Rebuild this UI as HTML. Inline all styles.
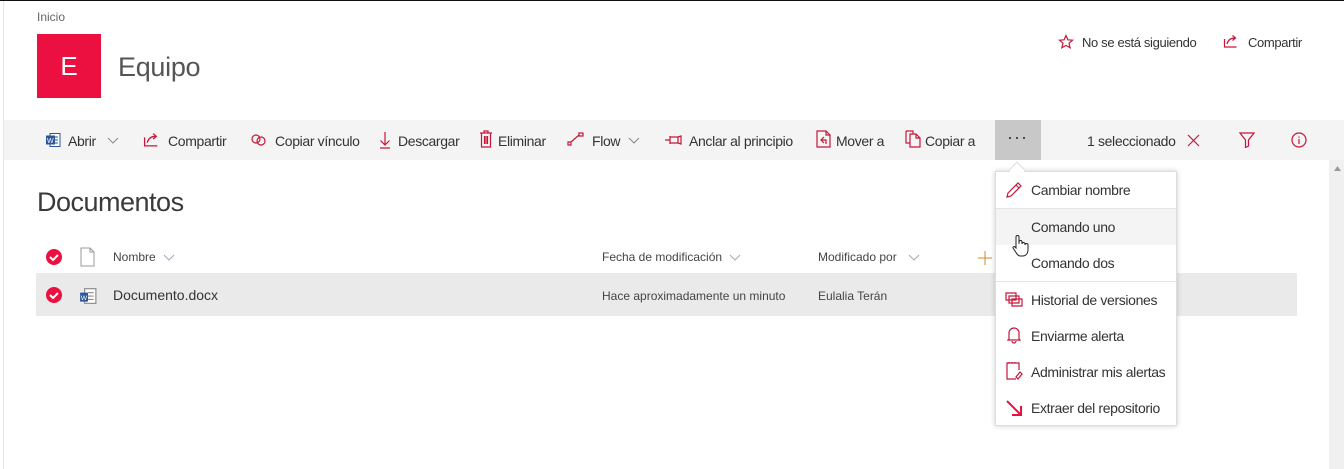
<!DOCTYPE html>
<html><head><meta charset="utf-8"><style>
*{margin:0;padding:0;box-sizing:border-box}
body{width:1344px;height:469px;overflow:hidden;background:#fff;font-family:"Liberation Sans",sans-serif;color:#333;position:relative}
.a{position:absolute;white-space:nowrap}
.t{font-size:14px;color:#333;letter-spacing:-0.35px}
svg{position:absolute}
.r{stroke:#c4173a;fill:none;stroke-width:1.2}
</style></head><body>
<div class="a" style="left:0;top:0;width:1344px;height:1px;background:#111"></div>
<div class="a" style="left:3px;top:1px;width:1px;height:468px;background:#e6e6e6"></div>
<div class="a" style="left:37px;top:10px;font-size:12px;color:#666">Inicio</div>
<div class="a" style="left:37px;top:34px;width:64px;height:64px;background:#ec1041;color:#fff;font-size:26px;text-align:center;line-height:64px">E</div>
<div class="a" style="left:118px;top:52px;font-size:27px;color:#555;letter-spacing:-0.3px">Equipo</div>
<svg style="left:1058px;top:34px" width="16" height="16" viewBox="0 0 16 16"><path class="r" d="M8 1.5l1.9 4.3 4.6.4-3.5 3 1.1 4.6L8 11.4 3.9 13.8 5 9.2 1.5 6.2l4.6-.4z"/></svg>
<div class="a t" style="left:1082px;top:35px;font-size:13px">No se está siguiendo</div>
<svg style="left:1223px;top:33px" width="16" height="16" viewBox="0 0 16 16"><path class="r" d="M1.5 6v8h12M4 11c1-4 4-6 8-6M9.5 2.5L12.5 5l-3 2.5"/></svg>
<div class="a t" style="left:1248px;top:35px;font-size:13px">Compartir</div>

<div class="a" style="left:4px;top:120px;width:1340px;height:40px;background:#f4f4f4"></div>
<div class="a" style="left:995px;top:120px;width:46px;height:40px;background:#c8c8c8"></div>
<svg style="left:45px;top:132px" width="16" height="16" viewBox="0 0 16 16"><rect x="5" y="1.5" width="10" height="13" fill="#fff" stroke="#2b579a"/><path d="M8 5h5M8 8h5M8 11h5" stroke="#2b579a"/><rect x="1" y="3.5" width="9" height="9" fill="#2b579a"/><text x="2" y="11" font-size="7" fill="#fff" font-family="Liberation Sans">W</text></svg>
<div class="a t" style="left:68px;top:133px">Abrir</div>
<svg style="left:107px;top:137px" width="12" height="8"><path d="M1 1l5 5 5-5" stroke="#888" fill="none"/></svg>
<svg style="left:143px;top:131px" width="17" height="17" viewBox="0 0 16 16"><path class="r" d="M1.5 6v8h12M4 11c1-4 4-6 8-6M9.5 2.5L12.5 5l-3 2.5"/></svg>
<div class="a t" style="left:168px;top:133px">Compartir</div>
<svg style="left:250px;top:133px" width="18" height="14" viewBox="0 0 18 14"><circle class="r" cx="6" cy="6" r="4"/><circle class="r" cx="11" cy="8" r="4"/></svg>
<div class="a t" style="left:275px;top:133px">Copiar vínculo</div>
<svg style="left:379px;top:131px" width="12" height="18"><path class="r" d="M6 1v13M1.5 9.5L6 14l4.5-4.5M1 17h10"/></svg>
<div class="a t" style="left:398px;top:133px">Descargar</div>
<svg style="left:479px;top:130px" width="14" height="18"><path class="r" d="M1 3h12M5 3V1h4v2M2.5 3v14h9V3M5.5 6v8M7 6v8M8.5 6v8"/></svg>
<div class="a t" style="left:498px;top:133px">Eliminar</div>
<svg style="left:567px;top:132px" width="18" height="14"><path class="r" d="M1 10h3v3H1zM12 1h4v3h-4zM4 10l8-7"/></svg>
<div class="a t" style="left:592px;top:133px">Flow</div>
<svg style="left:628px;top:137px" width="12" height="8"><path d="M1 1l5 5 5-5" stroke="#888" fill="none"/></svg>
<svg style="left:665px;top:134px" width="18" height="12"><path class="r" d="M0 6h5M5 2v8M5 3h8v6H5M13 3l3 -1v8l-3-1"/></svg>
<div class="a t" style="left:689px;top:133px">Anclar al principio</div>
<svg style="left:816px;top:130px" width="16" height="18"><path class="r" d="M1 1h9l4 4v12H1zM10 1v4h4M8 7l-3 3 3 3M5 10h5v4"/></svg>
<div class="a t" style="left:836px;top:133px">Mover a</div>
<svg style="left:905px;top:130px" width="16" height="18"><path class="r" d="M1 1h7v3M1 1v12h4M5 4h6l4 4v9H5zM11 4v4h4"/></svg>
<div class="a t" style="left:925px;top:133px">Copiar a</div>
<div class="a" style="left:1007px;top:127px;font-size:18px;color:#333;letter-spacing:1px">···</div>
<div class="a t" style="left:1087px;top:133px">1 seleccionado</div>
<svg style="left:1187px;top:134px" width="13" height="13"><path class="r" d="M1 1l11 11M12 1L1 12"/></svg>
<svg style="left:1239px;top:132px" width="16" height="16"><path class="r" d="M1 1h14l-5.5 7v6l-3 1.5V8z"/></svg>
<svg style="left:1291px;top:132px" width="16" height="16"><circle class="r" cx="8" cy="8" r="7"/><path class="r" d="M8 7v5M8 4.5v1.3"/></svg>

<div class="a" style="left:1329px;top:160px;width:15px;height:309px;background:#f0f0f0"></div>
<svg style="left:1334px;top:166px" width="7" height="5"><path d="M0 5L3.5 0 7 5z" fill="#999"/></svg>

<div class="a" style="left:37px;top:187px;font-size:27px;color:#3a3a3a;letter-spacing:-0.5px">Documentos</div>
<svg style="left:45px;top:248px" width="18" height="18"><circle cx="9" cy="9" r="8" fill="#ec1041"/><path d="M5 9l3 3 5-5" stroke="#fff" stroke-width="2" fill="none"/></svg>
<svg style="left:80px;top:247px" width="16" height="20"><path d="M1 1h9l4 4v14H1z M10 1v4h4" stroke="#999" fill="#fff"/></svg>
<div class="a" style="left:113px;top:250px;font-size:12px;color:#444">Nombre</div>
<svg style="left:163px;top:254px" width="12" height="8"><path d="M1 1l5 5 5-5" stroke="#a0a8bb" fill="none"/></svg>
<div class="a" style="left:602px;top:250px;font-size:12px;color:#444">Fecha de modificación</div>
<svg style="left:729px;top:254px" width="12" height="8"><path d="M1 1l5 5 5-5" stroke="#aaa" fill="none"/></svg>
<div class="a" style="left:818px;top:250px;font-size:12px;color:#444">Modificado por</div>
<svg style="left:908px;top:254px" width="12" height="8"><path d="M1 1l5 5 5-5" stroke="#aaa" fill="none"/></svg>
<svg style="left:978px;top:251px" width="14" height="14"><path d="M7 0v14M0 7h14" stroke="#d08a2a"/></svg>

<div class="a" style="left:36px;top:273px;width:1261px;height:43px;background:#eaeaea"></div>
<svg style="left:45px;top:286px" width="18" height="18"><circle cx="9" cy="9" r="8" fill="#ec1041"/><path d="M5 9l3 3 5-5" stroke="#fff" stroke-width="2" fill="none"/></svg>
<svg style="left:79px;top:287px" width="18" height="18" viewBox="0 0 16 16"><rect x="5" y="1.5" width="10" height="13" fill="#fff" stroke="#888"/><path d="M8 5h5M8 8h5M8 11h5" stroke="#888"/><rect x="1" y="5" width="7" height="8" fill="#2b579a"/><text x="1.5" y="11.5" font-size="6" fill="#fff" font-family="Liberation Sans">W</text></svg>
<div class="a" style="left:113px;top:287px;font-size:14px;color:#333">Documento.docx</div>
<div class="a" style="left:602px;top:289px;font-size:12px;color:#444">Hace aproximadamente un minuto</div>
<div class="a" style="left:818px;top:289px;font-size:12px;color:#444">Eulalia Terán</div>

<div class="a" style="left:995px;top:171px;width:182px;height:255px;background:#fff;border:1px solid #ddd;box-shadow:0 0 5px rgba(0,0,0,.2)"></div>
<div class="a" style="left:1011px;top:164px;width:12px;height:12px;background:#fff;transform:rotate(45deg);border-left:1px solid #ddd;border-top:1px solid #ddd"></div>
<div class="a" style="left:996px;top:208px;width:180px;height:1px;background:#e4e4e4"></div>
<div class="a" style="left:996px;top:209px;width:180px;height:36px;background:#f4f4f4"></div>
<div class="a" style="left:996px;top:281px;width:180px;height:1px;background:#e4e4e4"></div>
<svg style="left:1006px;top:181px" width="17" height="17"><path class="r" d="M1 16l1-4L12 2l3 3L5 15zM10 4l3 3"/></svg>
<div class="a t" style="left:1031px;top:182px">Cambiar nombre</div>
<div class="a t" style="left:1031px;top:219px">Comando uno</div>
<div class="a t" style="left:1031px;top:255px">Comando dos</div>
<svg style="left:1011px;top:234px" width="20" height="24"><path d="M5 14V3a1.5 1.5 0 013 0v7V8a1.5 1.5 0 013 0v2a1.5 1.5 0 013 0v1a1.5 1.5 0 013 0v5c0 3-2 6-5 6H9c-2 0-3-2-5-5l-2-3c-.5-1 1-2 2-1z" fill="#fff" stroke="#222"/></svg>
<svg style="left:1005px;top:292px" width="18" height="16"><path class="r" d="M1 1h10v7H1zM4 4h10v7H4zM7 7h10v7H7z"/></svg>
<div class="a t" style="left:1031px;top:292px">Historial de versiones</div>
<svg style="left:1007px;top:327px" width="14" height="17"><path class="r" d="M2 12V6a5 5 0 0110 0v6l1 1H1zM5 14a2 2 0 004 0"/></svg>
<div class="a t" style="left:1031px;top:328px">Enviarme alerta</div>
<svg style="left:1006px;top:362px" width="17" height="18"><path class="r" d="M10 17H1V1h12v7M3 1V0M6 1V0M9 1V0M12 17l4-5-2-2-4 5z"/></svg>
<div class="a t" style="left:1031px;top:364px">Administrar mis alertas</div>
<svg style="left:1005px;top:399px" width="18" height="18"><path d="M2 2l13 13M7 16h9V7" stroke="#ec1041" stroke-width="2" fill="none"/></svg>
<div class="a t" style="left:1031px;top:400px">Extraer del repositorio</div>
</body></html>
